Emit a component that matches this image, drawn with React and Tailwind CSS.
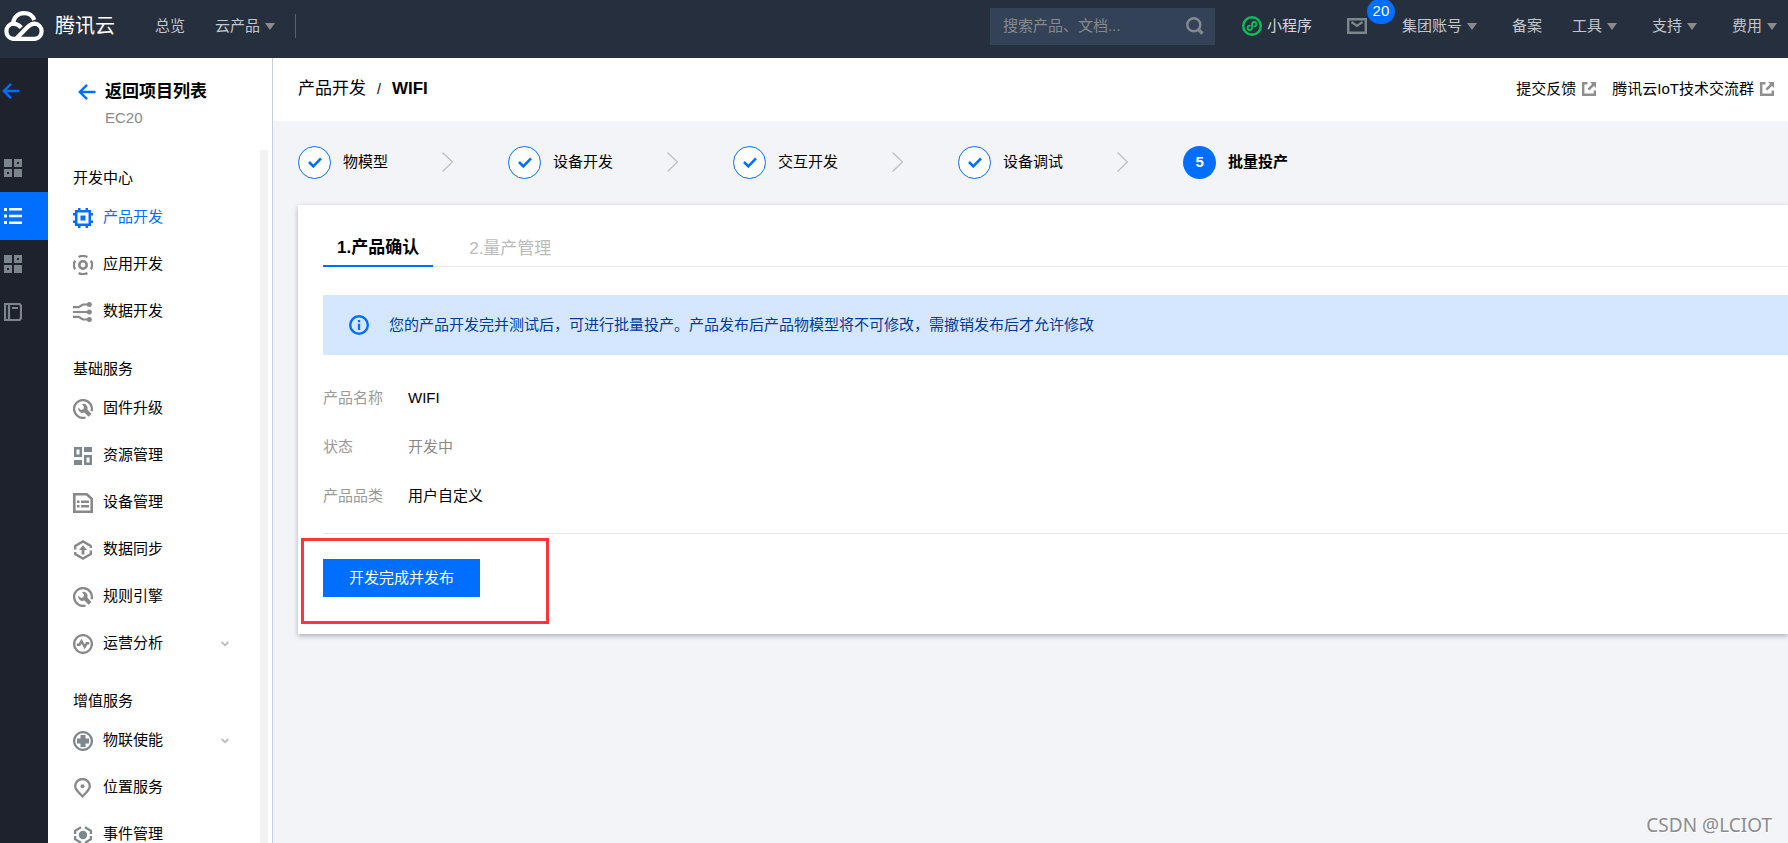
import React from "react";

const FONT = "font-['Liberation_Sans','Noto_Sans_CJK_SC',sans-serif]";

function Svg({ w = 20, h = 20, className = "", children }) {
  return (
    <svg
      width={w}
      height={h}
      viewBox={`0 0 ${w} ${h}`}
      fill="none"
      aria-hidden="true"
      className={`shrink-0 ${className}`}
    >
      {children}
    </svg>
  );
}

const Logo = () => (
  <Svg w={42} h={30} className="text-white">
    <g stroke="currentColor" strokeWidth="4.2">
      <path d="M10 12.600C10.600 6.400 15 2.200 21 2.200c4.800 0 8.700 2.600 10.300 6.800" />
      <path d="M18.300 16.600C15.800 14 13.800 12.600 10.200 12.600a7.700 7.700 0 0 0 0 15.300h21.600a7.700 7.700 0 0 0 0-15.300c-2.900 0-5.100 1.300-7.200 3.400L13.600 27.200" />
    </g>
  </Svg>
);

const BackArrow = () => (
  <Svg w={18} h={16} className="text-[#006eff]">
    <path d="M9 .8 1.800 8 9 15.200M2 8h15.500" stroke="currentColor" strokeWidth="2.400" />
  </Svg>
);

const Caret = () => (
  <Svg w={10} h={7} className="text-[#8b8b8b]">
    <path d="M0 0h10L5 7z" fill="currentColor" />
  </Svg>
);

const SearchIcon = () => (
  <Svg w={18} h={18} className="text-[#85898f]">
    <circle cx="7.800" cy="7.800" r="6.500" stroke="currentColor" strokeWidth="2.400" />
    <path d="m12.300 12.300 4.200 4.200" stroke="currentColor" strokeWidth="3.200" />
  </Svg>
);

const MiniProgram = () => (
  <Svg className="text-[#0abf5b]">
    <circle cx="10" cy="10" r="8.800" stroke="currentColor" strokeWidth="2.400" />
    <path
      d="M7.800 9.600a2.200 2.200 0 1 0 2.200 2.500V7.900a2.200 2.200 0 1 1 2.200 2.500"
      stroke="currentColor"
      strokeWidth="1.800"
      strokeLinecap="round"
    />
  </Svg>
);

const Mail = () => (
  <Svg w={20} h={16} className="text-[#7e868d]">
    <path d="M1.200 1.200h17.600v13.600H1.200z" stroke="currentColor" strokeWidth="2.400" />
    <path d="m4.500 4 5.500 4 5.500-4" stroke="currentColor" strokeWidth="2.200" />
  </Svg>
);

const External = () => (
  <Svg w={14} h={14} className="text-[#8f8f8f]">
    <path d="M5.500 1.200H1.200v11.600h11.600V8.500" stroke="currentColor" strokeWidth="2.400" />
    <path d="M8 0h6v6l-2.100-2.100-4.600 4.600-1.800-1.800 4.600-4.600z" fill="currentColor" />
  </Svg>
);

const Grid = () => (
  <Svg w={18} h={18}>
    <path
      fill="currentColor"
      fillRule="evenodd"
      d="M0 0h8v8H0zM10 0h8v8h-8zM13 3h2v2h-2zM0 10h8v8H0zM3 13h2v2H3zM10 10h8v8h-8z"
    />
  </Svg>
);

const ListIcon = () => (
  <Svg w={18} h={18}>
    <path fill="currentColor" d="M0 1h3v3H0zM5 1h13v2.500H5zM0 7.500h3v3H0zM5 7.800h13v2.400H5zM0 14h3v3H0zM5 14.500h13V17H5z" />
  </Svg>
);

const Book = () => (
  <Svg w={18} h={18}>
    <path d="M1 1h14.500L17 2.500v13L15.500 17H1zM5 1v16" stroke="currentColor" strokeWidth="2.200" />
    <path d="M8 5h6" stroke="currentColor" strokeWidth="2" />
  </Svg>
);

const Chip = () => (
  <Svg>
    <path d="M3.200 3.200h13.600v13.600H3.200z" stroke="currentColor" strokeWidth="2.600" />
    <path
      fill="currentColor"
      d="M7.500 7.500h5v5h-5zM5 0h2.500v3H5zM12.500 0H15v3h-2.500zM5 17h2.500v3H5zM12.500 17H15v3h-2.500zM0 5h3v2.500H0zM0 12.500h3V15H0zM17 5h3v2.500h-3zM17 12.500h3V15h-3z"
    />
  </Svg>
);

const AppIcon = () => (
  <Svg>
    <circle cx="10" cy="10" r="3.700" stroke="currentColor" strokeWidth="2.600" />
    <path
      d="M5.600 2.100a9 9 0 0 1 8.800 0M17.900 5.600a9 9 0 0 1 0 8.800M14.400 17.900a9 9 0 0 1-8.800 0M2.100 14.400a9 9 0 0 1 0-8.800"
      stroke="currentColor"
      strokeWidth="2.300"
    />
  </Svg>
);

const DataIcon = () => (
  <Svg>
    <path
      d="M0 5.200h5.500L10 2.500h6M0 10h16M0 14.800h5.500L10 17.500h6"
      stroke="currentColor"
      strokeWidth="2.200"
    />
    <circle cx="16.300" cy="2.600" r="2.500" fill="currentColor" />
    <circle cx="16.300" cy="10" r="2.500" fill="currentColor" />
    <circle cx="16.300" cy="17.400" r="2.500" fill="currentColor" />
  </Svg>
);

const Wrench = () => (
  <Svg>
    <path d="M12.500 18.500A8.900 8.900 0 1 1 18.600 12.200" stroke="currentColor" strokeWidth="2.300" />
    <path
      fill="currentColor"
      d="M9 5.100a4.400 4.400 0 0 1 5.500 5.700l4 4.100-2.900 2.900-4.200-4.200A4.400 4.400 0 0 1 5.300 8.600L8 11.100 10.400 10.300 11 7.700z"
    />
  </Svg>
);

const Resource = () => (
  <Svg>
    <path
      fill="currentColor"
      fillRule="evenodd"
      d="M1 1h8v10H1zM3.500 3.500h3v5h-3zM11 1h8v5h-8zM1 14h8v5H1zM11 9h8v10h-8zM13.500 11.500h3v5h-3z"
    />
  </Svg>
);

const Device = () => (
  <Svg>
    <path d="M1.300 1.300h12.500l4.900 4.600v12.800H1.300z" stroke="currentColor" strokeWidth="2.600" />
    <path
      fill="currentColor"
      d="M4 7.500h2.500V10H4zM8 7.500h8V10H8zM4 12h2.500v2.500H4zM8 12h8v2.500H8z"
    />
  </Svg>
);

const Sync = () => (
  <Svg>
    <path
      d="M2.200 9.500V5.900L10 1.400l7.800 4.500v2M2.200 12v2.100l7.800 4.500 7.800-4.500v-3.600"
      stroke="currentColor"
      strokeWidth="2.300"
    />
    <path d="M10 5.200 14 10h-2.600v4.500H8.600V10H6z" fill="currentColor" />
  </Svg>
);

const Pulse = () => (
  <Svg>
    <circle cx="10" cy="10" r="8.900" stroke="currentColor" strokeWidth="2.300" />
    <path d="M3.800 10.700h2.700l2-3.500 3.200 5.600 2-3.500h2.500" stroke="currentColor" strokeWidth="2.500" />
  </Svg>
);

const Enable = () => (
  <Svg>
    <circle cx="10" cy="10" r="8.900" stroke="currentColor" strokeWidth="2.300" />
    <path d="M7.500 4h5v3.500H16v5h-3.500V16h-5v-3.500H4v-5h3.500z" fill="currentColor" />
  </Svg>
);

const Pin = () => (
  <Svg>
    <path
      d="M9.500 18.400C5 14 2.200 11.500 2.200 8.300a7.300 7.300 0 0 1 14.600 0c0 3.200-2.800 5.700-7.300 10.100z"
      stroke="currentColor"
      strokeWidth="2.300"
    />
    <circle cx="9.500" cy="8.200" r="2" fill="currentColor" />
  </Svg>
);

const EventIcon = () => (
  <Svg>
    <path
      d="M8 2.300 2.100 5.800V9M12 2.300l5.900 3.500V9M2.100 11v3.200L8 17.700M17.900 11v3.200L12 17.700"
      stroke="currentColor"
      strokeWidth="2.300"
    />
    <circle cx="10" cy="10" r="4.200" fill="currentColor" />
  </Svg>
);

const SmallChevron = () => (
  <Svg w={8} h={6} className="text-[#bbbbbb]">
    <path d="m.7 1 3.300 3.300L7.300 1" stroke="currentColor" strokeWidth="1.800" />
  </Svg>
);

const StepChevron = () => (
  <Svg w={11} h={20} className="text-[#bcbdc0]">
    <path d="m.5.5 10 9.500-10 9.500" stroke="currentColor" strokeWidth="1.200" />
  </Svg>
);

const InfoIcon = () => (
  <Svg className="text-[#006eff]">
    <circle cx="10" cy="10" r="8.800" stroke="currentColor" strokeWidth="2.400" />
    <path d="M8.900 5h2.300v2.200H8.900zM8.900 8.700h2.300V15H8.900z" fill="currentColor" />
  </Svg>
);

const groups = [
  {
    title: "开发中心",
    items: [
      { label: "产品开发", Icon: Chip, active: true },
      { label: "应用开发", Icon: AppIcon },
      { label: "数据开发", Icon: DataIcon },
    ],
  },
  {
    title: "基础服务",
    items: [
      { label: "固件升级", Icon: Wrench },
      { label: "资源管理", Icon: Resource, cool: true },
      { label: "设备管理", Icon: Device },
      { label: "数据同步", Icon: Sync },
      { label: "规则引擎", Icon: Wrench },
      { label: "运营分析", Icon: Pulse, expandable: true },
    ],
  },
  {
    title: "增值服务",
    items: [
      { label: "物联使能", Icon: Enable, expandable: true, cool: true },
      { label: "位置服务", Icon: Pin },
      { label: "事件管理", Icon: EventIcon, cool: true },
    ],
  },
];

const steps = ["物模型", "设备开发", "交互开发", "设备调试", "批量投产"];

const rail = [
  { name: "概览", Icon: Grid },
  { name: "项目", Icon: ListIcon, active: true },
  { name: "服务", Icon: Grid },
  { name: "文档", Icon: Book },
];

const fields = [
  { label: "产品名称", value: "WIFI" },
  { label: "状态", value: "开发中", muted: true },
  { label: "产品品类", value: "用户自定义" },
];

function MenuButton({ children }) {
  return (
    <button type="button" className="flex items-center gap-[5px] whitespace-nowrap">
      {children}
      <Caret />
    </button>
  );
}

function Header() {
  return (
    <header className="flex h-[58px] shrink-0 items-start bg-[#262f3e] pr-[11px] pl-[3px] text-[15px] text-[#c3c6ca]">
      <div className="flex h-[52px] flex-1 items-center">
        <a href="#" className="flex items-center gap-[10px] text-xl text-white">
          <Logo />
          腾讯云
        </a>
        <a href="#" className="ml-10">总览</a>
        <div className="ml-[30px] flex items-center gap-5">
          <MenuButton>云产品</MenuButton>
          <span className="h-6 w-px bg-[#5a616c]" />
        </div>
      </div>
      <div className="flex h-[52px] items-center">
        <form className="flex h-[37px] w-[225px] items-center bg-[#344258] pr-[11px] pl-[13px]">
          <input
            type="text"
            aria-label="搜索"
            placeholder="搜索产品、文档..."
            className="min-w-0 flex-1 bg-transparent outline-none placeholder:text-[#87898c]"
          />
          <button type="button" aria-label="搜索">
            <SearchIcon />
          </button>
        </form>
        <a href="#" className="ml-[27px] flex items-center gap-[5px] text-[#d5d7da]">
          <MiniProgram />
          小程序
        </a>
        <button type="button" aria-label="消息" className="relative ml-[35px]">
          <Mail />
          <span className="absolute -top-[19px] left-5 flex h-[25px] w-7 items-center justify-center rounded-full bg-[#006eff] text-[15px] text-white">
            20
          </span>
        </button>
        <div className="ml-[35px] flex items-center gap-[35px]">
          <MenuButton>集团账号</MenuButton>
          <a href="#" className="-mr-[5px]">备案</a>
          <MenuButton>工具</MenuButton>
          <MenuButton>支持</MenuButton>
          <MenuButton>费用</MenuButton>
        </div>
      </div>
    </header>
  );
}

function Rail() {
  return (
    <nav aria-label="全局导航" className="w-12 shrink-0 bg-[#1e222d]">
      <button type="button" aria-label="返回" className="flex h-[86px] w-full items-center pb-5 pl-[2px]">
        <BackArrow />
      </button>
      {rail.map(({ name, Icon, active }) => (
        <a
          key={name}
          href="#"
          aria-label={name}
          className={`flex h-12 items-center pl-1 ${active ? "bg-[#006eff] text-white" : "text-[#7c858c]"}`}
        >
          <Icon />
        </a>
      ))}
    </nav>
  );
}

function Sidebar() {
  return (
    <aside className="flex w-[225px] shrink-0 flex-col border-r border-[#c8cfdc] bg-white text-[15px] text-black">
      <div className="h-[92px] shrink-0 pt-[21px] pl-[30px]">
        <a href="#" className="flex items-center gap-[9px] text-[17px] leading-[26px] font-bold">
          <BackArrow />
          返回项目列表
        </a>
        <p className="pl-[27px] leading-[26px] text-[#888888]">EC20</p>
      </div>
      <div className="mr-1 min-h-0 flex-1 overflow-hidden border-r-8 border-[#f2f2f2] pt-[11px] pl-[25px]">
        {groups.map((g) => (
          <section key={g.title} className="mb-[17px]">
            <h2 className="leading-[33px]">{g.title}</h2>
            <ul>
              {g.items.map(({ label, Icon, active, expandable, cool }) => (
                <li key={label}>
                  <a
                    href="#"
                    className={`flex h-[47px] items-center gap-[10px] pr-[31px] ${active ? "text-[#006eff]" : ""}`}
                  >
                    <span className={active ? "" : cool ? "text-[#7c878e]" : "text-[#888888]"}>
                      <Icon />
                    </span>
                    <span className="flex-1">{label}</span>
                    {expandable && <SmallChevron />}
                  </a>
                </li>
              ))}
            </ul>
          </section>
        ))}
      </div>
    </aside>
  );
}

function Steps() {
  return (
    <ol className="flex h-[84px] items-center pb-[2px] pl-[25px] text-[15px] text-black">
      {steps.map((label, i) => {
        const current = i === steps.length - 1;
        return (
          <li key={label} className="flex items-center">
            {current ? (
              <span className="flex size-[33px] items-center justify-center rounded-full bg-[#006eff] font-bold text-white">
                {i + 1}
              </span>
            ) : (
              <span className="flex size-[33px] items-center justify-center rounded-full border border-[#006eff] bg-white text-[#006eff]">
                <Svg w={14} h={11}>
                  <path d="m1 5 4.300 4.300L13 1.300" stroke="currentColor" strokeWidth="2.600" />
                </Svg>
              </span>
            )}
            <span className={`ml-3 whitespace-nowrap ${current ? "font-bold" : ""}`}>{label}</span>
            {!current && (
              <span className="mr-[55px] ml-[54px]">
                <StepChevron />
              </span>
            )}
          </li>
        );
      })}
    </ol>
  );
}

export default function App() {
  return (
    <div className={`flex h-screen flex-col overflow-hidden bg-[#f2f4f8] ${FONT}`}>
      <Header />
      <div className="flex min-h-0 flex-1">
        <Rail />
        <Sidebar />
        <main className="relative min-w-0 flex-1 overflow-hidden">
          <div className="flex h-[63px] items-center justify-between bg-white pr-[14px] pb-px pl-[25px] text-black">
            <nav aria-label="面包屑" className="flex items-center text-[17px]">
              <a href="#">产品开发</a>
              <span className="mx-[11px] text-sm">/</span>
              <strong>WIFI</strong>
            </nav>
            <div className="flex items-center gap-4 text-[15px]">
              <a href="#" className="flex items-center gap-[6px]">
                提交反馈 <External />
              </a>
              <a href="#" className="flex items-center gap-[6px]">
                腾讯云IoT技术交流群 <External />
              </a>
            </div>
          </div>
          <Steps />
          <section className="ml-[25px] bg-white pt-6 pb-[10px] pl-[25px] text-[15px] shadow-[0_2px_5px_rgba(40,45,70,0.35)]">
            <div role="tablist" className="flex gap-6 border-b border-[#e5e8ed] text-[17px]">
              <button
                type="button"
                role="tab"
                aria-selected="true"
                className="-mb-px h-[38px] border-b-2 border-[#006eff] px-[14px] pt-[2px] font-bold text-black"
              >
                1.产品确认
              </button>
              <button type="button" role="tab" aria-selected="false" className="px-3 pt-[2px] text-[#bbbbbb]">
                2.量产管理
              </button>
            </div>
            <div role="note" className="mt-7 flex h-[60px] items-center gap-5 bg-[#d5e7ff] pl-[26px] text-[#003b9c]">
              <InfoIcon />
              <p>您的产品开发完并测试后，可进行批量投产。产品发布后产品物模型将不可修改，需撤销发布后才允许修改</p>
            </div>
            <dl className="border-b border-[#e5e5e5] pt-[19px] pb-3">
              {fields.map((f) => (
                <div key={f.label} className="flex h-[49px] items-center">
                  <dt className="w-[85px] text-[#999999]">{f.label}</dt>
                  <dd className={f.muted ? "text-[#888888]" : "text-black"}>{f.value}</dd>
                </div>
              ))}
            </dl>
            <div className="mt-1 -ml-[22px] h-[86px] w-[248px] border-[3px] border-[#ff3636] pt-[18px] pl-[19px]">
              <button type="button" className="h-[38px] bg-[#006eff] px-[26px] text-white">
                开发完成并发布
              </button>
            </div>
          </section>
          <p className="absolute right-4 bottom-1 font-['Noto_Sans',sans-serif] text-[19px] text-[#8c8c8f] [text-shadow:1px_1px_0_#ffffff]">
            CSDN @LCIOT
          </p>
        </main>
      </div>
    </div>
  );
}
